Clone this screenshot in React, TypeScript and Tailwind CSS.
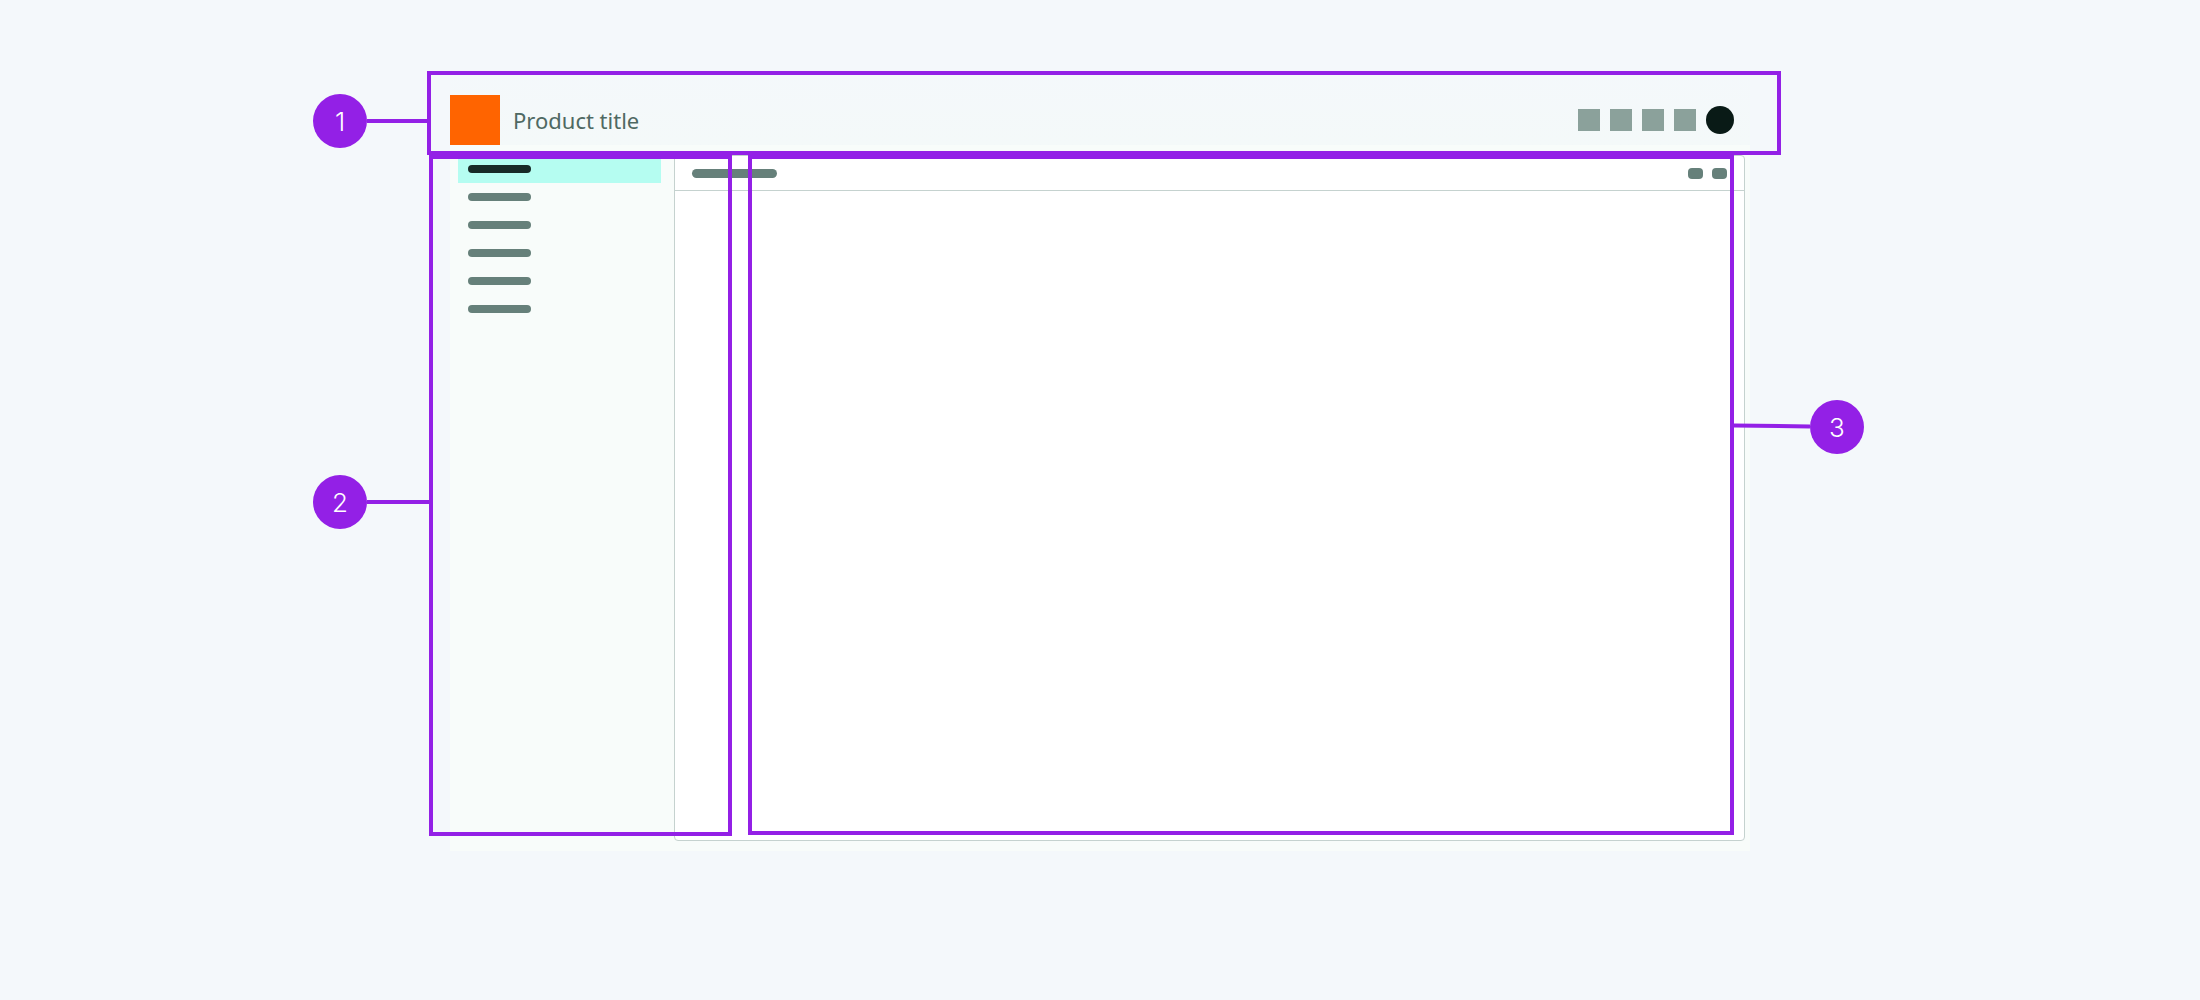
function Outline({ className }: { className: string }) {
  return <div className={`absolute border-4 border-[#9320e6] ${className}`} />;
}

function Marker({ n, className }: { n: string; className: string }) {
  return (
    <div
      className={`absolute flex h-[54px] w-[54px] items-center justify-center rounded-full bg-[#9320e6] text-[26px] font-light text-white ${className}`}
    >
      {n}
    </div>
  );
}

export default function App() {
  const items = [0, 1, 2, 3, 4];
  return (
    <div className="relative h-[1000px] w-[2200px] overflow-hidden bg-[#f4f8fb] pt-[71px] font-['Inter',sans-serif]">
      <div className="mx-auto w-[1300px]">
        <header className="flex h-[74px] items-end bg-linear-to-b from-[#f4f8fb] to-[#f4f9f9] pr-4">
          <div className="h-[50px] w-[50px] bg-[#ff6400]" />
          <span className="mb-[8px] ml-[13px] font-['Noto_Sans',sans-serif] text-[22px] text-[#4f6963]">Product title</span>
          <div className="mb-[11px] ml-auto flex items-center gap-[10px]">
            <div className="h-[22px] w-[22px] bg-[#8ba19b]" />
            <div className="h-[22px] w-[22px] bg-[#8ba19b]" />
            <div className="h-[22px] w-[22px] bg-[#8ba19b]" />
            <div className="h-[22px] w-[22px] bg-[#8ba19b]" />
            <div className="h-7 w-7 rounded-full bg-[#091a16]" />
          </div>
        </header>
        <div className="flex h-[706px] bg-[#f8fcfa] pt-[10px]">
          <nav className="w-[224px] pl-2 pr-[13px]">
            <div className="flex h-7 items-center bg-[#b5fdf1] pl-[10px]">
              <div className="h-2 w-[63px] rounded-full bg-[#172a27]" />
            </div>
            {items.map((i) => (
              <div key={i} className="flex h-7 items-center pl-[10px]">
                <div className="h-2 w-[63px] rounded-full bg-[#66807a]" />
              </div>
            ))}
          </nav>
          <main className="h-[686px] w-[1071px] rounded-[4px] border border-[#c5d2cf] bg-white">
            <div className="flex h-[35px] items-center justify-between border-b border-[#c5d2cf] px-[17px]">
              <div className="h-[9px] w-[85px] rounded-full bg-[#66807a]" />
              <div className="flex gap-[9px]">
                <div className="h-[11px] w-[15px] rounded-[4px] bg-[#66807a]" />
                <div className="h-[11px] w-[15px] rounded-[4px] bg-[#66807a]" />
              </div>
            </div>
          </main>
        </div>
      </div>

      <Outline className="left-[427px] top-[71px] h-[84px] w-[1354px]" />
      <Outline className="left-[429px] top-[155px] h-[681px] w-[303px]" />
      <Outline className="left-[748px] top-[155px] h-[680px] w-[986px]" />

      <div className="absolute left-[367px] top-[119px] h-1 w-[60px] bg-[#9320e6]" />
      <div className="absolute left-[367px] top-[500px] h-1 w-[62px] bg-[#9320e6]" />
      <div className="absolute left-[1734px] top-[424px] h-1 w-[76px] rotate-[0.75deg] bg-[#9320e6]" />

      <Marker n="1" className="left-[313px] top-[94px]" />
      <Marker n="2" className="left-[313px] top-[475px]" />
      <Marker n="3" className="left-[1810px] top-[400px]" />
    </div>
  );
}
